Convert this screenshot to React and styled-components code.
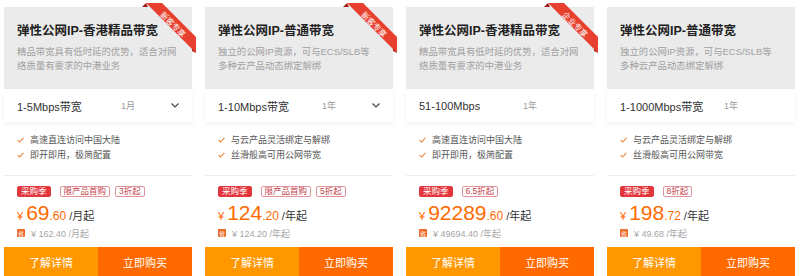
import React from "react";
import styled, { createGlobalStyle } from "styled-components";

const GlobalStyle = createGlobalStyle`
  html, body {
    margin: 0;
    padding: 0;
    background: #fff;
    font-family: "Liberation Sans", "Noto Sans CJK SC", sans-serif;
  }
`;

const Page = styled.div`
  display: grid;
  grid-template-columns: repeat(4, 188px);
  gap: 13px;
  padding: 7px 0 0 4px;
`;

const Card = styled.div`
  position: relative;
  display: flex;
  flex-direction: column;
  background: #fff;
`;

const Head = styled.div`
  height: 82px;
  box-sizing: border-box;
  padding: 17px 13px 0;
  background: #ebebeb;

  h3 {
    margin: 0;
    font-size: 12.5px;
    line-height: 14px;
    font-weight: bold;
    color: #222;
  }
  p {
    margin: 7px 0 0;
    font-size: 9.4px;
    line-height: 14px;
    color: #a0a0a0;
    white-space: nowrap;
  }
`;

const Select = styled.div`
  height: 33px;
  display: flex;
  align-items: center;
  padding: 0 13px;
  background: #fff;
  box-shadow: 0 2px 5px rgba(0, 0, 0, 0.06);

  .spec {
    width: 104px;
    font-size: 11px;
    color: #333;
  }
  .period {
    flex: 1;
    font-size: 9px;
    color: #999;
  }
`;

const Features = styled.ul`
  margin: 0;
  list-style: none;
  padding: 10px 13px 13px;
  border-bottom: 1px solid #eee;

  li {
    display: flex;
    align-items: center;
    gap: 6px;
    height: 15px;
    font-size: 9px;
    color: #555;
  }
`;

const Tags = styled.div`
  display: flex;
  align-items: center;
  margin: 10px 13px 0;
`;

const Tag = styled.span`
  display: inline-flex;
  align-items: center;
  height: 9px;
  padding: 0 3px;
  margin-right: ${(p) => (p.$hot ? "9px" : "5px")};
  border-radius: 2px;
  font-size: 8.5px;
  line-height: 9px;
  color: ${(p) => (p.$hot ? "#fff" : "#c4404a")};
  background: ${(p) => (p.$hot ? "#e3353c" : "#fff")};
  border: 1px solid ${(p) => (p.$hot ? "#e3353c" : "#e0959a")};
`;

const Price = styled.div`
  display: flex;
  align-items: baseline;
  height: 24px;
  margin: 4px 13px 0;
  color: #ff6a00;

  .cur {
    font-size: 11px;
    margin-right: 3px;
  }
  .int {
    font-size: 21px;
  }
  .dec {
    font-size: 12px;
    margin-right: 3px;
  }
  .unit {
    font-size: 11px;
    color: #333;
  }
`;

const Origin = styled.div`
  display: flex;
  align-items: center;
  gap: 6px;
  height: 12px;
  margin: 2px 13px 0;
  font-size: 9px;
  color: #a5a5a5;
`;

const Save = styled.span`
  display: inline-flex;
  align-items: center;
  justify-content: center;
  width: 8px;
  height: 8px;
  background: #f06a2a;
  color: #fff;
  font-size: 6px;
  border-radius: 1px;
`;

const Actions = styled.div`
  display: grid;
  grid-template-columns: 1fr 1fr;
  margin-top: 8px;
  height: 30px;
`;

const Button = styled.button`
  border: none;
  margin: 0;
  padding: 0;
  font-family: inherit;
  font-size: 11px;
  color: #fff;
  background: ${(p) => (p.$buy ? "#ff6a00" : "#ff9800")};
  cursor: pointer;
`;

const RibbonWrap = styled.div`
  position: absolute;
  top: -4px;
  right: -4px;
  width: 56px;
  height: 56px;
`;

function Ribbon({ text }) {
  return (
    <RibbonWrap>
      <svg width="56" height="56" viewBox="0 0 56 56">
        <polygon points="2,4 6,0 8,4" fill="#9e1b1b" />
        <polygon points="52,44 56,50 52,48" fill="#9e1b1b" />
        <polygon points="6,0 22,0 56,34 56,50" fill="#e8402f" />
        <text
          x="33"
          y="24.5"
          fill="#fff"
          fontSize="8"
          textAnchor="middle"
          transform="rotate(45 33 21.5)"
          fontFamily="Noto Sans CJK SC, sans-serif"
        >
          {text}
        </text>
      </svg>
    </RibbonWrap>
  );
}

const Check = () => (
  <svg width="7" height="6" viewBox="0 0 7 6">
    <polyline points="0.6,3.2 2.6,5 6.4,0.8" fill="none" stroke="#f0843c" strokeWidth="1.1" />
  </svg>
);

const Chevron = () => (
  <svg width="8" height="5" viewBox="0 0 8 5">
    <polyline points="0.5,0.5 4,4 7.5,0.5" fill="none" stroke="#444" strokeWidth="1.1" />
  </svg>
);

const hk = {
  title: "弹性公网IP-香港精品带宽",
  desc: ["精品带宽具有低时延的优势，适合对网", "络质量有要求的中港业务"],
  features: ["高速直连访问中国大陆", "即开即用，极简配置"],
};
const normal = {
  title: "弹性公网IP-普通带宽",
  desc: ["独立的公网IP资源，可与ECS/SLB等", "多种云产品动态绑定解绑"],
  features: ["与云产品灵活绑定与解绑", "丝滑般高可用公网带宽"],
};

const products = [
  { ...hk, ribbon: "新客专享", spec: "1-5Mbps带宽", period: "1月", chevron: true, tags: ["限产品首购", "3折起"], int: "69", dec: ".60", unit: "/月起", origin: "¥ 162.40 /月起" },
  { ...normal, ribbon: "新客专享", spec: "1-10Mbps带宽", period: "1年", chevron: true, tags: ["限产品首购", "5折起"], int: "124", dec: ".20", unit: "/年起", origin: "¥ 124.20 /年起" },
  { ...hk, ribbon: "企业专享", spec: "51-100Mbps", period: "1年", tags: ["6.5折起"], int: "92289", dec: ".60", unit: "/年起", origin: "¥ 49694.40 /年起" },
  { ...normal, spec: "1-1000Mbps带宽", period: "1年", tags: ["8折起"], int: "198", dec: ".72", unit: "/年起", origin: "¥ 49.68 /年起" },
];

export default function App() {
  return (
    <>
      <GlobalStyle />
      <Page>
        {products.map((p, i) => (
          <Card key={i}>
            <Head>
              <h3>{p.title}</h3>
              <p>
                {p.desc[0]}
                <br />
                {p.desc[1]}
              </p>
            </Head>
            <Select>
              <span className="spec">{p.spec}</span>
              <span className="period">{p.period}</span>
              {p.chevron && <Chevron />}
            </Select>
            <Features>
              {p.features.map((f) => (
                <li key={f}>
                  <Check />
                  {f}
                </li>
              ))}
            </Features>
            <Tags>
              <Tag $hot>采购季</Tag>
              {p.tags.map((t) => (
                <Tag key={t}>{t}</Tag>
              ))}
            </Tags>
            <Price>
              <span className="cur">¥</span>
              <span className="int">{p.int}</span>
              <span className="dec">{p.dec}</span>
              <span className="unit">{p.unit}</span>
            </Price>
            <Origin>
              <Save>省</Save>
              {p.origin}
            </Origin>
            <Actions>
              <Button>了解详情</Button>
              <Button $buy>立即购买</Button>
            </Actions>
            {p.ribbon && <Ribbon text={p.ribbon} />}
          </Card>
        ))}
      </Page>
    </>
  );
}
